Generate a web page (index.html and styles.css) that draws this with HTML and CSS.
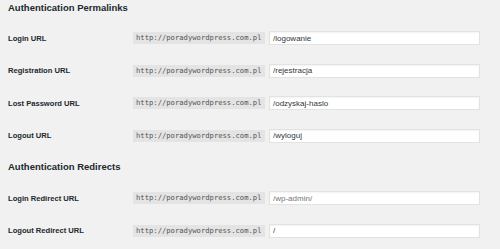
FILE: index.html
```html
<!DOCTYPE html>
<html lang="pl">
<head>
    <meta charset="UTF-8">
    <meta name="viewport" content="width=device-width, initial-scale=1.0">
    <title>Authentication</title>
    <link rel="stylesheet" href="styles.css">
</head>
<body>
    <div class="wrap">
        <h2 class="section-title first">Authentication Permalinks</h2>
        <div class="form-row">
            <label for="login-url">Login URL</label>
            <div class="field">
                <code class="prefix">http://poradywordpress.com.pl</code>
                <input type="text" id="login-url" value="/logowanie">
            </div>
        </div>
        <div class="form-row">
            <label for="register-url">Registration URL</label>
            <div class="field">
                <code class="prefix">http://poradywordpress.com.pl</code>
                <input type="text" id="register-url" value="/rejestracja">
            </div>
        </div>
        <div class="form-row">
            <label for="lostpass-url">Lost Password URL</label>
            <div class="field">
                <code class="prefix">http://poradywordpress.com.pl</code>
                <input type="text" id="lostpass-url" value="/odzyskaj-haslo">
            </div>
        </div>
        <div class="form-row">
            <label for="logout-url">Logout URL</label>
            <div class="field">
                <code class="prefix">http://poradywordpress.com.pl</code>
                <input type="text" id="logout-url" value="/wyloguj">
            </div>
        </div>

        <h2 class="section-title">Authentication Redirects</h2>
        <div class="form-row">
            <label for="login-redirect">Login Redirect URL</label>
            <div class="field">
                <code class="prefix">http://poradywordpress.com.pl</code>
                <input type="text" id="login-redirect" placeholder="/wp-admin/">
            </div>
        </div>
        <div class="form-row">
            <label for="logout-redirect">Logout Redirect URL</label>
            <div class="field">
                <code class="prefix">http://poradywordpress.com.pl</code>
                <input type="text" id="logout-redirect" value="/">
            </div>
        </div>
    </div>
</body>
</html>
```

FILE: styles.css
```css
body {
    margin: 0;
    padding: 0;
    background-color: #f1f1f1;
    font-family: "Liberation Sans", Arial, sans-serif;
    color: #23282d;
    overflow: hidden;
}
.wrap {
    padding: 0 8px;
}
.section-title {
    font-size: 9.5px;
    font-weight: bold;
    line-height: 16px;
    height: 16px;
    margin: 7px 0 7px 0;
}
.section-title.first {
    margin: 0 0 6px 0;
}
.form-row {
    display: grid;
    grid-template-columns: 125px 1fr;
    align-items: center;
    height: 32.5px;
}
.form-row label {
    font-size: 7.6px;
    font-weight: bold;
}
.field {
    display: flex;
    align-items: center;
    gap: 4px;
}
.prefix {
    display: block;
    width: 132px;
    height: 12px;
    line-height: 12px;
    padding: 0 0 0 3px;
    box-sizing: border-box;
    background: #e4e4e4;
    color: #50545a;
    font-family: "DejaVu Sans Mono", "Liberation Mono", monospace;
    font-size: 7.2px;
}
.field input {
    width: 211px;
    height: 14px;
    box-sizing: border-box;
    margin: 0;
    padding: 0 3px;
    border: 1px solid #e2e2e2;
    box-shadow: inset 0 1px 2px rgba(0, 0, 0, 0.05);
    background: #fff;
    color: #32373c;
    font-family: "Liberation Sans", Arial, sans-serif;
    font-size: 8px;
    outline: none;
}
.field input::placeholder {
    color: #72777c;
}
```
